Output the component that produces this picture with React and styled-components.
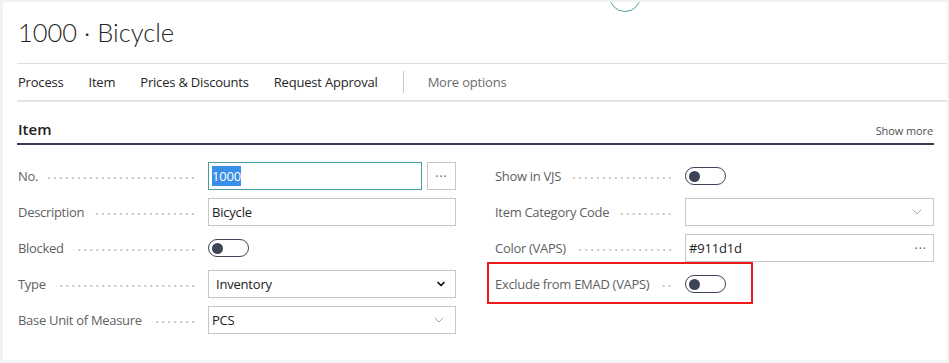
import React from 'react'
import styled, { createGlobalStyle } from 'styled-components'
import { ChevronDown } from 'lucide-react'

const GlobalStyle = createGlobalStyle`
  html, body { margin: 0; padding: 0; }
  body {
    background: #f3f3f3;
    font-family: 'Open Sans', 'Segoe UI', sans-serif;
    color: #212121;
  }
`

const Page = styled.div`
  width: 949px;
  height: 363px;
  box-sizing: border-box;
  padding: 2px 2px 3px 3px;
  overflow: hidden;
`

const Card = styled.div`
  background: #fff;
  height: 100%;
  display: flex;
  flex-direction: column;
  position: relative;
  overflow: hidden;
`

const Persona = styled.div`
  position: absolute;
  left: 606px;
  top: -22px;
  width: 30px;
  height: 30px;
  border: 1.5px solid #4fa7a5;
  border-radius: 50%;
`

const Header = styled.div`
  height: 61px;
  margin-left: 14px;
  display: flex;
  align-items: center;
  border-bottom: 1px solid #dedede;
`

const Title = styled.h1`
  margin: 0;
  font-family: 'Lato', 'Open Sans', sans-serif;
  font-size: 25.5px;
  font-weight: 300;
  color: #262626;
  padding: 0 0 1px 1px;
`

const ActionBar = styled.div`
  height: 36px;
  margin-left: 14px;
  display: flex;
  align-items: center;
  border-bottom: 2px solid #e4e4e4;
  font-size: 13px;
  letter-spacing: -0.2px;
`

const Action = styled.span`
  margin-right: 25px;
  margin-left: ${p => (p.$first ? 1 : 0)}px;
  color: ${p => (p.$muted ? '#6b6b6b' : '#262626')};
`

const Separator = styled.span`
  width: 1px;
  height: 22px;
  background: #c8c8c8;
  margin-right: 24px;
`

const Content = styled.div`
  padding: 0 13px 0 14px;
`

const SectionHead = styled.div`
  display: flex;
  align-items: flex-end;
  justify-content: space-between;
  height: 43px;
  border-bottom: 2px solid #343d52;
  padding: 0 1px 4px 1px;
  box-sizing: border-box;
`

const SectionTitle = styled.span`
  font-size: 15px;
  font-weight: 600;
  color: #212121;
`

const ShowMore = styled.span`
  font-size: 11px;
  color: #505050;
  margin-bottom: 1px;
  letter-spacing: -0.1px;
`

const Grid = styled.div`
  display: grid;
  grid-template-columns: 439px 440px;
  column-gap: 38px;
  margin-top: 13px;
`

const Column = styled.div`
  display: flex;
  flex-direction: column;
`

const Row = styled.div`
  height: 36px;
  display: flex;
  align-items: center;
  position: relative;
`

const LabelCell = styled.div`
  width: 178px;
  margin-right: 12px;
  display: flex;
  align-items: center;
  font-size: 13px;
  letter-spacing: -0.3px;
  color: #5f5f5f;
  white-space: nowrap;
  padding-left: 1px;
`

const Leader = styled.span`
  flex: 1;
  height: 2px;
  margin: 4px 0 0 10px;
  background-image: radial-gradient(circle, #c8c8c8 0.8px, transparent 1px);
  background-size: 6px 2px;
  background-position: right center;
`

const Field = styled.div`
  flex: 1;
  height: 28px;
  box-sizing: border-box;
  border: 1px solid ${p => (p.$focus ? '#3f9c9a' : '#c6c6c6')};
  display: flex;
  align-items: center;
  padding: 0 8px 0 3px;
  font-size: 13px;
  letter-spacing: -0.2px;
  color: #212121;
`

const Value = styled.span`
  flex: 1;
  padding-left: ${p => p.$pad || 0}px;
`

const Selected = styled.span`
  background: #3b8ee8;
  color: #fff;
  padding: 1px 0;
`

const Assist = styled.div`
  width: 29px;
  height: 28px;
  margin-left: 5px;
  box-sizing: border-box;
  border: 1px solid #c6c6c6;
  display: flex;
  align-items: center;
  justify-content: center;
  color: #555;
  font-size: 12px;
  letter-spacing: 1px;
`

const Ellipsis = styled.span`
  color: #555;
  font-size: 12px;
  letter-spacing: 1px;
  margin-right: -2px;
`

const Toggle = styled.div`
  width: 41px;
  height: 18px;
  box-sizing: border-box;
  border: 1px solid #3c4455;
  border-radius: 10px;
  display: flex;
  align-items: center;
  padding-left: 3px;
`

const Knob = styled.span`
  width: 11px;
  height: 11px;
  border-radius: 50%;
  background: #3c4455;
`

const Highlight = styled.div`
  position: absolute;
  left: -7px;
  top: -4px;
  width: 266px;
  height: 42px;
  box-sizing: border-box;
  border: 2px solid #ee1b1b;
  pointer-events: none;
`

const Label = ({ children }) => (
  <LabelCell>
    {children}
    <Leader />
  </LabelCell>
)

const Switch = () => (
  <Toggle>
    <Knob />
  </Toggle>
)

export default function App() {
  return (
    <>
      <GlobalStyle />
      <Page>
        <Card>
          <Persona />
          <Header>
            <Title>1000 · Bicycle</Title>
          </Header>
          <ActionBar>
            <Action $first>Process</Action>
            <Action>Item</Action>
            <Action>Prices &amp; Discounts</Action>
            <Action>Request Approval</Action>
            <Separator />
            <Action $muted>More options</Action>
          </ActionBar>
          <Content>
            <SectionHead>
              <SectionTitle>Item</SectionTitle>
              <ShowMore>Show more</ShowMore>
            </SectionHead>
            <Grid>
              <Column>
                <Row>
                  <Label>No.</Label>
                  <Field $focus>
                    <Value><Selected>1000</Selected></Value>
                  </Field>
                  <Assist>···</Assist>
                </Row>
                <Row>
                  <Label>Description</Label>
                  <Field><Value>Bicycle</Value></Field>
                </Row>
                <Row>
                  <Label>Blocked</Label>
                  <Switch />
                </Row>
                <Row>
                  <Label>Type</Label>
                  <Field>
                    <Value $pad={4}>Inventory</Value>
                    <ChevronDown size={12} strokeWidth={3.5} color="#111" />
                  </Field>
                </Row>
                <Row>
                  <Label>Base Unit of Measure</Label>
                  <Field>
                    <Value>PCS</Value>
                    <ChevronDown size={16} strokeWidth={1} color="#777" />
                  </Field>
                </Row>
              </Column>
              <Column>
                <Row>
                  <Label>Show in VJS</Label>
                  <Switch />
                </Row>
                <Row>
                  <Label>Item Category Code</Label>
                  <Field>
                    <Value />
                    <ChevronDown size={16} strokeWidth={1} color="#777" />
                  </Field>
                </Row>
                <Row>
                  <Label>Color (VAPS)</Label>
                  <Field>
                    <Value>#911d1d</Value>
                    <Ellipsis>···</Ellipsis>
                  </Field>
                </Row>
                <Row>
                  <Label>Exclude from EMAD (VAPS)</Label>
                  <Switch />
                  <Highlight />
                </Row>
              </Column>
            </Grid>
          </Content>
        </Card>
      </Page>
    </>
  )
}
